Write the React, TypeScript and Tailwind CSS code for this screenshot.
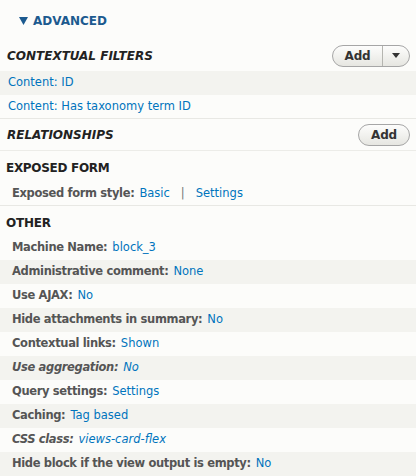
import React from 'react';

type Row = { label: string; value: string; italic?: boolean };

const otherRows: Row[] = [
  { label: 'Machine Name:', value: 'block_3' },
  { label: 'Administrative comment:', value: 'None' },
  { label: 'Use AJAX:', value: 'No' },
  { label: 'Hide attachments in summary:', value: 'No' },
  { label: 'Contextual links:', value: 'Shown' },
  { label: 'Use aggregation:', value: 'No', italic: true },
  { label: 'Query settings:', value: 'Settings' },
  { label: 'Caching:', value: 'Tag based' },
  { label: 'CSS class:', value: 'views-card-flex', italic: true },
  { label: 'Hide block if the view output is empty:', value: 'No' },
];

const AddButton: React.FC<{ split?: boolean }> = ({ split }) => (
  <div className="flex h-[22px] items-stretch rounded-full border border-[#a6a6a6] bg-gradient-to-b from-[#fdfdfc] to-[#e6e6e1] text-[12px] font-bold tracking-[-0.2px] text-[#333]">
    <span className={split ? 'flex w-[50px] items-center justify-center border-r border-[#b5b5b0]' : 'flex w-[50px] items-center justify-center'}>
      Add
    </span>
    {split && (
      <span className="flex w-[26px] items-center justify-center">
        <svg width="8" height="5" viewBox="0 0 8 5">
          <path d="M0 0h8L4 5z" fill="#333" />
        </svg>
      </span>
    )}
  </div>
);

const App: React.FC = () => {
  return (
    <div className="h-[476px] w-[416px] overflow-hidden bg-[#fcfcfa] font-['DejaVu_Sans',sans-serif] text-[11.5px] text-[#333]">
      <div className="flex h-[40px] items-center gap-[5px] pl-[19px] pt-[1px] text-[12px] font-bold text-[#1c5a8f]">
        <svg width="9" height="8" viewBox="0 0 9 8">
          <path d="M0 0h9L4.5 8z" fill="#1c5a8f" />
        </svg>
        <span>ADVANCED</span>
      </div>

      <div className="flex h-[31px] items-center justify-between pl-[7px] pr-[6px]">
        <h3 className="text-[12px] font-bold italic text-[#222]">CONTEXTUAL FILTERS</h3>
        <AddButton split />
      </div>
      <div className="flex h-[24px] items-center bg-[#f3f3ef] pl-[8px] text-[#0074bd]">Content: ID</div>
      <div className="flex h-[24px] items-center border-b border-[#e8e8e4] pl-[8px] text-[#0074bd]">
        Content: Has taxonomy term ID
      </div>

      <div className="flex h-[32px] items-center justify-between border-b border-[#ecece8] pl-[7px] pr-[6px]">
        <h3 className="text-[12px] font-bold italic text-[#222]">RELATIONSHIPS</h3>
        <AddButton />
      </div>

      <div className="flex h-[31px] items-center pl-[6px] pt-[3px] text-[12px] font-bold tracking-[-0.3px] text-[#222]">EXPOSED FORM</div>
      <div className="flex h-[24px] items-center border-b border-[#e8e8e4] pl-[12px]">
        <span className="font-bold tracking-[-0.35px] text-[#555]">Exposed form style:</span>
        <span className="ml-[5px] text-[#0074bd]">Basic</span>
        <span className="mx-[11px] text-[#777]">|</span>
        <span className="text-[#0074bd]">Settings</span>
      </div>

      <div className="flex h-[30px] items-center pl-[6px] pt-[3px] text-[12px] font-bold tracking-[-0.2px] text-[#222]">OTHER</div>
      <div className="flex flex-col">
        {otherRows.map((r, i) => (
          <div
            key={r.label}
            className={(i % 2 === 1 ? 'bg-[#f3f3ef] ' : '') + 'flex h-[24px] items-center pl-[12px]' + (r.italic ? ' italic' : '')}
          >
            <span className="font-bold tracking-[-0.35px] text-[#555]">{r.label}</span>
            <span className="ml-[5px] text-[#0074bd]">{r.value}</span>
          </div>
        ))}
      </div>
    </div>
  );
};

export default App;
